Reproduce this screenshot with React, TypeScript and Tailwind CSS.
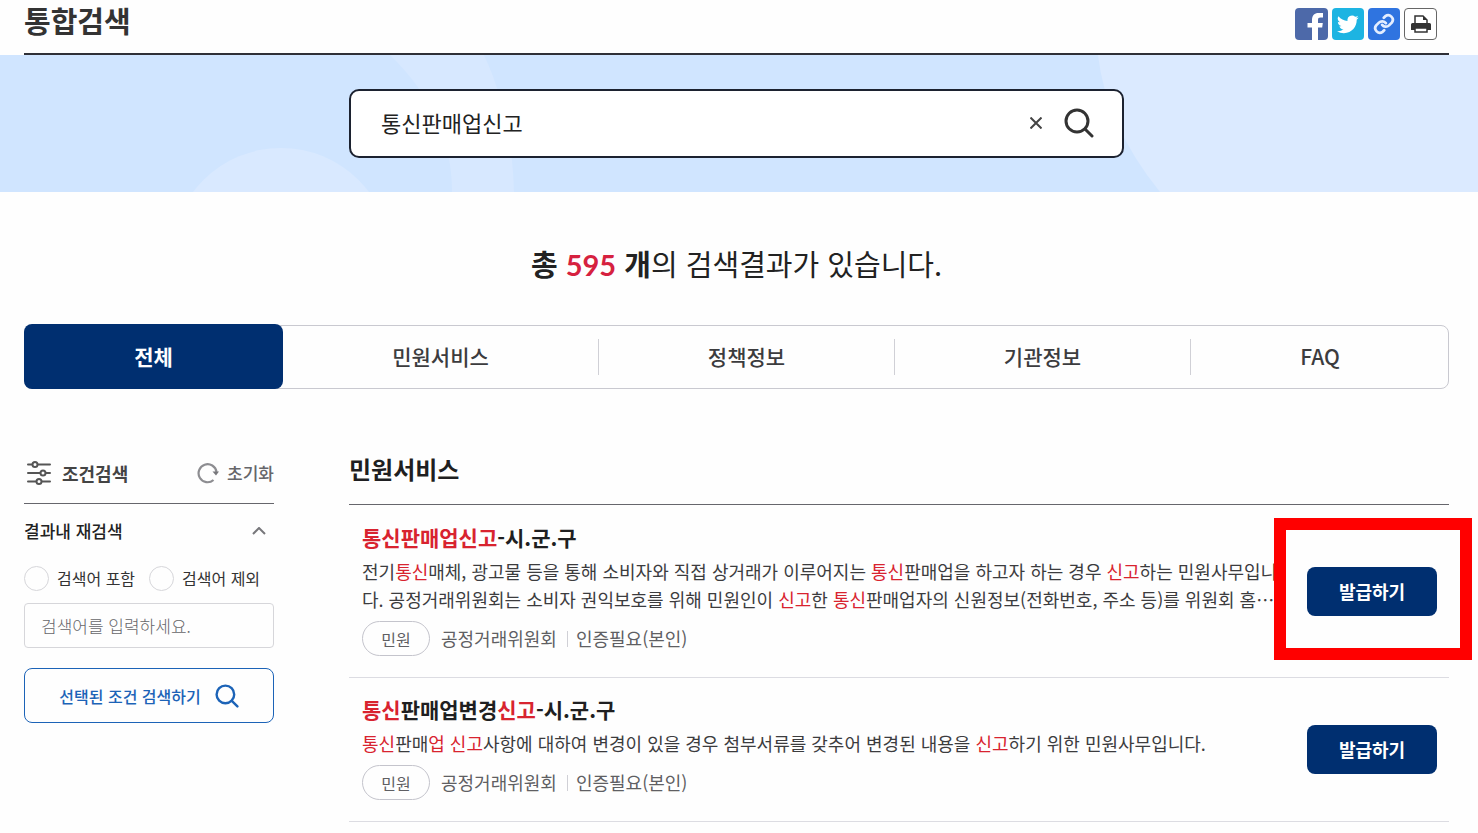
import { useState, type ReactNode } from "react";

function SearchIcon({ className, weight }: { className: string; weight: number }) {
  return (
    <svg viewBox="0 0 30 30" fill="none" stroke="currentColor" strokeWidth={weight} strokeLinecap="round" className={className} aria-hidden="true">
      <circle cx="13" cy="13" r="11" />
      <path d="M21 21l7 7" />
    </svg>
  );
}

function HeroShapes() {
  return (
    <svg className="absolute inset-0 h-full w-full" viewBox="0 0 1478 137" preserveAspectRatio="none" aria-hidden="true">
      <rect width="1478" height="137" fill="#d0e5ff" />
      <circle cx="281" cy="203" r="110" fill="#d9e9ff" />
      <path d="M390 0H484Q512 60 514 137H452Q452 60 390 0Z" fill="#d7e8ff" />
      <path d="M1098 0Q1106 70 1160 137H1478V0Z" fill="#dbeaff" />
    </svg>
  );
}

function ShareLinks() {
  return (
    <div className="flex gap-1">
      <a href="#facebook" aria-label="페이스북" className="h-8 w-[33px] overflow-hidden rounded-sm bg-[#4d69a9] text-white">
        <svg viewBox="0 0 32 32" className="size-8" aria-hidden="true">
          <path fill="currentColor" d="M17 32V19.500h-4.500V15H17v-3c0-4.500 2.500-7 6.500-7H28v4.500h-2.500c-2 0-2.500.8-2.500 2.500v3h4.800l-.6 4.500H23V32z" />
        </svg>
      </a>
      <a href="#twitter" aria-label="트위터" className="flex size-8 items-center justify-center rounded-sm bg-[#1db4e2] text-white">
        <svg viewBox="0 0 24 24" className="size-[22px]" aria-hidden="true">
          <path fill="currentColor" d="M23.600 4.900a9.600 9.600 0 0 1-2.800.8 4.900 4.900 0 0 0 2.100-2.700 9.700 9.700 0 0 1-3.100 1.200 4.900 4.900 0 0 0-8.300 4.400A13.800 13.800 0 0 1 1.600 3.600a4.900 4.900 0 0 0 1.500 6.500 4.800 4.800 0 0 1-2.200-.6v.1a4.900 4.900 0 0 0 3.900 4.700 4.900 4.900 0 0 1-2.200.1 4.900 4.900 0 0 0 4.500 3.400A9.800 9.800 0 0 1 0 19.800a13.800 13.800 0 0 0 7.500 2.200c9 0 14-7.500 14-14v-.6a10 10 0 0 0 2.100-2.500z" />
        </svg>
      </a>
      <a href="#copy" aria-label="주소 복사" className="flex size-8 items-center justify-center rounded-sm bg-[#2f74e0] text-[#e4eeff]">
        <svg viewBox="0 0 24 24" className="size-[22px]" fill="none" stroke="currentColor" strokeWidth="3" strokeLinecap="round" strokeLinejoin="round" aria-hidden="true">
          <path d="M10 13a5 5 0 0 0 7.500.5l3-3a5 5 0 0 0-7-7l-1.700 1.700" />
          <path d="M14 11a5 5 0 0 0-7.500-.5l-3 3a5 5 0 0 0 7 7l1.700-1.700" />
        </svg>
      </a>
      <button type="button" aria-label="인쇄" className="flex h-8 w-[33px] items-center justify-center rounded-sm border border-[#666] bg-white text-[#333]">
        <svg viewBox="0 0 22 18" className="h-[18px] w-[22px]" aria-hidden="true">
          <path d="M5 9V1h8l4 4v4" fill="#fff" stroke="currentColor" strokeWidth="1.500" />
          <path d="M13 1v4h4z" fill="currentColor" />
          <path d="M2.500 8h17a1.500 1.500 0 0 1 1.500 1.500V15H1V9.500A1.500 1.500 0 0 1 2.500 8z" fill="currentColor" />
          <rect x="5" y="13" width="12" height="4" fill="#fff" stroke="currentColor" strokeWidth="1.500" />
        </svg>
      </button>
    </div>
  );
}

const tabs = ["전체", "민원서비스", "정책정보", "기관정보", "FAQ"];

function Tabs() {
  const [active, setActive] = useState(0);
  return (
    <nav className="relative mt-[39px] grid h-[65px] grid-cols-[259fr_316fr_296fr_296fr_258fr]">
      <div className="pointer-events-none absolute inset-x-0 top-px bottom-0 rounded-lg border border-[#c9c9d0]" />
      {tabs.map((tab, i) => (
        <button
          key={tab}
          type="button"
          onClick={() => setActive(i)}
          className={
            i === active
              ? "relative rounded-lg bg-[#002f70] text-[21px] font-bold text-white"
              : "relative flex items-center text-[21px] font-medium text-[#3c3c3e]"
          }
        >
          {i === active ? tab : (
            <>
              <span className="grow">{tab}</span>
              {i < tabs.length - 1 && <span className="h-9 w-px bg-[#d0d0d6]" />}
            </>
          )}
        </button>
      ))}
    </nav>
  );
}

function ScopeRadio({ label }: { label: string }) {
  return (
    <label className="flex w-[125px] items-center gap-2">
      <input type="radio" name="scope" className="size-[25px] appearance-none rounded-full border border-[#d6d6da] checked:border-8 checked:border-[#002f70]" />
      {label}
    </label>
  );
}

function Filters() {
  return (
    <aside className="w-[250px] shrink-0">
      <div className="flex h-[61px] items-center justify-between border-b border-[#66666c]">
        <h2 className="flex items-center gap-[11px] text-[18px] font-bold text-[#444]">
          <svg viewBox="0 0 24 24" className="ml-[3px] size-6" fill="none" stroke="#555" strokeWidth="2" strokeLinecap="round" aria-hidden="true">
            <path d="M1 3.500h4M11 3.500h12M1 12h12M19 12h4M1 20.500h8M15 20.500h8" />
            <circle cx="8" cy="3.500" r="2.500" />
            <circle cx="16" cy="12" r="2.500" />
            <circle cx="12" cy="20.500" r="2.500" />
          </svg>
          조건검색
        </h2>
        <button type="button" className="flex items-center gap-2 text-[17px] font-medium text-[#66666a]">
          <svg viewBox="0 0 22 22" className="size-[22px]" aria-hidden="true">
            <path d="M16.500 18A9 9 0 1 1 19.500 10" fill="none" stroke="#8d8d91" strokeWidth="2.200" />
            <path d="M15.500 9.500h6.500l-3 4z" fill="#77777b" />
          </svg>
          초기화
        </button>
      </div>
      <button type="button" className="flex h-[54px] w-full items-center justify-between pr-2 text-[17px] font-medium text-[#222]">
        결과내 재검색
        <svg viewBox="0 0 14 8" className="h-2 w-3.5" fill="none" stroke="#77777b" strokeWidth="2" aria-hidden="true">
          <path d="M1 7l6-6 6 6" />
        </svg>
      </button>
      <div className="flex h-10 items-center text-[16px] text-[#333]">
        <ScopeRadio label="검색어 포함" />
        <ScopeRadio label="검색어 제외" />
      </div>
      <input
        type="text"
        aria-label="결과내 검색어"
        placeholder="검색어를 입력하세요."
        className="mt-[5px] h-[45px] w-full rounded-sm border border-[#d6d6da] px-4 text-[17px] font-light placeholder:text-[#66666a]"
      />
      <button type="button" className="mt-5 flex h-[55px] w-full items-center justify-center gap-3.5 rounded-lg border border-[#1c63b7] text-[16px] font-medium text-[#1c63b7]">
        선택된 조건 검색하기
        <SearchIcon className="size-6" weight={3} />
      </button>
    </aside>
  );
}

function Hit({ children }: { children: ReactNode }) {
  return <em className="text-[#d8232f] not-italic">{children}</em>;
}

function Result({ title, children, highlighted }: { title: ReactNode; children: ReactNode; highlighted?: boolean }) {
  return (
    <li className="flex items-center justify-between border-b border-[#dcdce2] pr-3 pl-[13px]">
      <div className="max-w-[920px] pt-4 pb-[21px]">
        <h3 className="text-[21px] leading-[30px] font-bold text-[#1f1f21]">
          <a href="#detail">{title}</a>
        </h3>
        <p className="mt-[5px] text-[18px] leading-7 text-[#3c3c3e]">{children}</p>
        <div className="mt-2 flex h-[35px] items-center text-[18px] text-[#5f5f63]">
          <span className="mr-[11px] flex h-full w-[68px] items-center justify-center rounded-full border border-[#c4c4cc] text-[16px]">민원</span>
          <span>공정거래위원회</span>
          <span className="mr-2 ml-[10px] h-4 w-px bg-[#d0d0d6]" />
          <span>인증필요(본인)</span>
        </div>
      </div>
      <div className="relative shrink-0">
        <button type="button" className="h-[49px] w-[130px] rounded-lg bg-[#002f70] text-[18px] font-bold text-white">발급하기</button>
        {highlighted && <span className="pointer-events-none absolute -top-[49px] -right-[35px] -bottom-11 -left-[33px] border-[12px] border-[#ff0000]" />}
      </div>
    </li>
  );
}

export default function App() {
  const [query, setQuery] = useState("통신판매업신고");
  return (
    <div lang="ko" className="min-h-screen overflow-x-hidden bg-[#fefefe] font-['Noto_Sans_CJK_KR','Noto_Sans',sans-serif] text-[#222]">
      <header className="mr-[29px] ml-6 flex h-[55px] items-start justify-between border-b-2 border-[#2f3037] pr-3">
        <h1 className="text-[29px] leading-10 font-bold text-[#333]">통합검색</h1>
        <div className="pt-2"><ShareLinks /></div>
      </header>

      <section className="relative h-[137px] pt-[34px] pr-[29px] pl-6">
        <HeroShapes />
        <form className="relative mx-auto flex h-[69px] max-w-[775px] items-center rounded-[10px] border-2 border-[#1c2230] bg-white pr-7 pb-0.5 pl-[30px]" onSubmit={(e) => e.preventDefault()}>
          <input
            type="text"
            aria-label="검색어"
            value={query}
            onChange={(e) => setQuery(e.target.value)}
            className="min-w-0 grow bg-transparent text-[22px] text-[#222] outline-none"
          />
          <button type="button" aria-label="지우기" onClick={() => setQuery("")} className="p-2">
            <svg viewBox="0 0 12 12" className="size-3" stroke="#444" strokeWidth="2" aria-hidden="true">
              <path d="M0.500 0.500l11 11M11.500 0.500l-11 11" />
            </svg>
          </button>
          <button type="submit" aria-label="검색" className="ml-3.5 text-[#333]">
            <SearchIcon className="size-[30px]" weight={3} />
          </button>
        </form>
      </section>

      <main className="pr-[29px] pl-6">
        <p className="mt-[51px] text-center text-[29px] leading-10 text-[#222]">
          <strong>총 <span className="font-[Lato] text-[#d6213f]">595</span> 개</strong>의 검색결과가 있습니다.
        </p>
        <Tabs />
        <div className="mt-[54px] flex gap-[75px]">
          <Filters />
          <section className="min-w-0 grow">
            <h2 className="flex h-[62px] items-center border-b border-[#66666c] pb-2.5 text-[24px] font-bold text-[#1f1f21]">민원서비스</h2>
            <ul className="pt-px">
              <Result highlighted title={<><Hit>통신판매업신고</Hit>-시.군.구</>}>
                전기<Hit>통신</Hit>매체, 광고물 등을 통해 소비자와 직접 상거래가 이루어지는 <Hit>통신</Hit>판매업을 하고자 하는 경우 <Hit>신고</Hit>하는 민원사무입니다. 공정거래위원회는 소비자 권익보호를 위해 민원인이 <Hit>신고</Hit>한 <Hit>통신</Hit>판매업자의 신원정보(전화번호, 주소 등)를 위원회 홈…
              </Result>
              <Result title={<><Hit>통신</Hit>판매업변경<Hit>신고</Hit>-시.군.구</>}>
                <Hit>통신</Hit>판매<Hit>업 신고</Hit>사항에 대하여 변경이 있을 경우 첨부서류를 갖추어 변경된 내용을 <Hit>신고</Hit>하기 위한 민원사무입니다.
              </Result>
            </ul>
          </section>
        </div>
      </main>
    </div>
  );
}
